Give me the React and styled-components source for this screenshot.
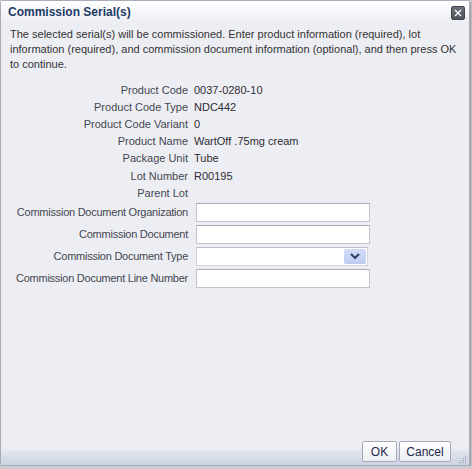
import styled, { createGlobalStyle } from "styled-components";

const GlobalStyle = createGlobalStyle`
  html, body {
    margin: 0;
    padding: 0;
    background: #c9cbd1;
    font-family: "Liberation Sans", Arial, sans-serif;
  }
`;

const textRows = [
  ["Product Code", "0037-0280-10"],
  ["Product Code Type", "NDC442"],
  ["Product Code Variant", "0"],
  ["Product Name", "WartOff .75mg cream"],
  ["Package Unit", "Tube"],
  ["Lot Number", "R00195"],
  ["Parent Lot", ""],
];

const inputRows = [
  ["Commission Document Organization", "input"],
  ["Commission Document", "input"],
  ["Commission Document Type", "select"],
  ["Commission Document Line Number", "input"],
];

export default function App() {
  return (
    <>
      <GlobalStyle />
      <Dialog>
        <Header>
          <Title>Commission Serial(s)</Title>
          <CloseButton title="Close">
            <svg width="8" height="8" viewBox="0 0 8 8">
              <path d="M1 1 L7 7 M7 1 L1 7" stroke="#fff" strokeWidth="1.4" />
            </svg>
          </CloseButton>
        </Header>

        <Content>
          <Intro>
            The selected serial(s) will be commissioned. Enter product information (required), lot
            information (required), and commission document information (optional), and then press OK
            to continue.
          </Intro>

          <Form>
            {textRows.map(([label, value]) => (
              <Row key={label} small>
                <Label>{label}</Label>
                <Value>{value}</Value>
              </Row>
            ))}
            {inputRows.map(([label, kind]) => (
              <Row key={label}>
                <Label tight>{label}</Label>
                {kind === "select" ? (
                  <SelectBox>
                    <SelectArrow>
                      <svg width="10" height="6" viewBox="0 0 10 6">
                        <path d="M1 1 L5 5 L9 1" fill="none" stroke="#2b3f66" strokeWidth="2" />
                      </svg>
                    </SelectArrow>
                  </SelectBox>
                ) : (
                  <TextInput type="text" />
                )}
              </Row>
            ))}
          </Form>
        </Content>

        <Footer>
          <Button>OK</Button>
          <Button wide>Cancel</Button>
          <Grip>
            <svg width="9" height="9" viewBox="0 0 9 9">
              {[
                [7, 1], [7, 3], [5, 3], [7, 5], [5, 5], [3, 5],
                [7, 7], [5, 7], [3, 7], [1, 7],
              ].map(([x, y]) => (
                <rect key={`${x}-${y}`} x={x} y={y} width="1" height="1" fill="#9a9ca6" />
              ))}
            </svg>
          </Grip>
        </Footer>
      </Dialog>
    </>
  );
}

const Dialog = styled.div`
  box-sizing: border-box;
  width: 470px;
  height: 466px;
  display: flex;
  flex-direction: column;
  background: #edeef4;
  border: 1px solid #a9acb8;
  border-radius: 3px;
  box-shadow: 1px 1px 2px rgba(0, 0, 0, 0.25);
`;

const Header = styled.div`
  height: 21px;
  display: flex;
  align-items: center;
  justify-content: space-between;
  padding: 0 4px 0 7px;
  background: linear-gradient(#ffffff, #edeef4);
`;

const Title = styled.div`
  font-size: 12px;
  font-weight: bold;
  color: #1d3b66;
`;

const CloseButton = styled.div`
  width: 12px;
  height: 12px;
  display: flex;
  align-items: center;
  justify-content: center;
  background: linear-gradient(#6c7079, #50545c);
  border: 1px solid #3f4249;
  border-radius: 2px;
  margin-top: 2px;
`;

const Content = styled.div`
  flex: 1;
  padding: 5px 10px 0 9px;
  color: #333;
  font-size: 11px;
`;

const Intro = styled.p`
  margin: 0 0 9px;
  line-height: 15px;
`;

const Form = styled.div`
  display: flex;
  flex-direction: column;
`;

const Row = styled.div`
  display: grid;
  grid-template-columns: 178px 1fr;
  column-gap: 6px;
  align-items: center;
  height: ${(p) => (p.small ? "17.2px" : "22px")};
`;

const Label = styled.div`
  display: flex;
  justify-content: flex-end;
  white-space: nowrap;
  color: #444650;
  letter-spacing: ${(p) => (p.tight ? "-0.25px" : "0")};
`;

const Value = styled.div`
  color: #2d2d33;
`;

const TextInput = styled.input`
  box-sizing: border-box;
  width: 174px;
  height: 19px;
  margin: 0 0 0 2px;
  padding: 0 3px;
  border: 1px solid #c1c4cd;
  border-top-color: #a8abb6;
  background: #fff;
  outline: none;
`;

const SelectBox = styled.div`
  box-sizing: border-box;
  width: 172px;
  height: 19px;
  margin-left: 2px;
  display: flex;
  justify-content: flex-end;
  align-items: center;
  padding-right: 1px;
  border: 1px solid #d2d5dc;
  border-top-color: #b8bbc5;
  background: #fff;
`;

const SelectArrow = styled.div`
  width: 22px;
  height: 15px;
  display: flex;
  align-items: center;
  justify-content: center;
  background: linear-gradient(#d3ddf7, #bccbf1);
  border-radius: 2px;
`;

const Footer = styled.div`
  position: relative;
  height: 24px;
  display: flex;
  justify-content: flex-end;
  align-items: flex-start;
  gap: 2px;
  padding: 0 18px 0 0;
  background: linear-gradient(#edeef4 0%, #edeef4 30%, #dfe3ee 45%, #cdd3e2 100%);
`;

const Button = styled.div`
  box-sizing: border-box;
  width: ${(p) => (p.wide ? "52px" : "35px")};
  height: 21px;
  display: flex;
  align-items: center;
  justify-content: center;
  font-size: 12px;
  color: #1e2a48;
  background: linear-gradient(#ffffff, #eceef4);
  border: 1px solid #a5a9b6;
  border-radius: 2px;
`;

const Grip = styled.div`
  position: absolute;
  right: 2px;
  bottom: 1px;
  width: 9px;
  height: 9px;
  display: flex;
`;
